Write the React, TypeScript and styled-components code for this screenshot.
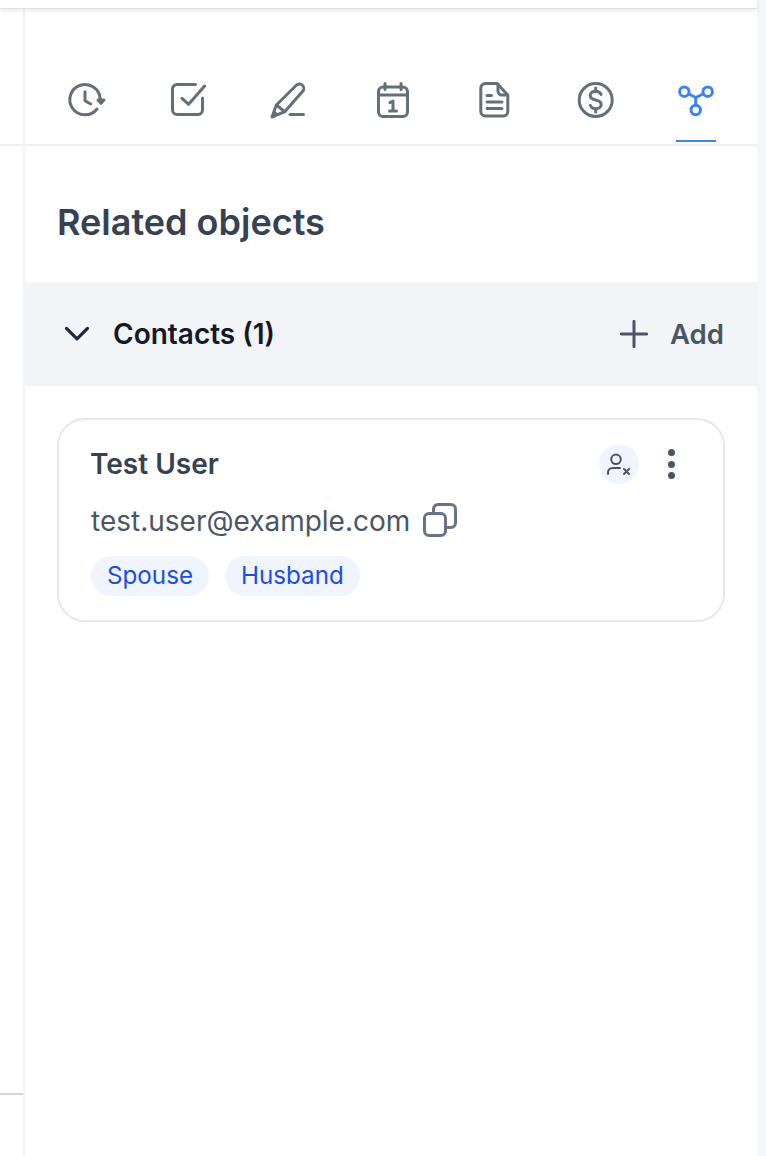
import React from "react";
import styled, { createGlobalStyle } from "styled-components";

const Global = createGlobalStyle`
  html, body { margin: 0; padding: 0; background: #fff; }
  body { font-family: Inter, "Liberation Sans", sans-serif; }
  * { box-sizing: border-box; }
`;

const Page = styled.div`
  display: flex;
  width: 766px;
  height: 1156px;
  overflow: hidden;
`;
const Column = styled.div`
  width: 757px;
  display: flex;
  flex-direction: column;
`;
const Strip = styled.div`
  width: 9px;
  background: #f3f6fb;
`;
const TopBar = styled.div`
  height: 9px;
  flex: none;
  background: #fff;
  border-bottom: 1px solid #dfe1e4;
  box-shadow: 0 2px 5px rgba(60, 70, 85, 0.12);
  position: relative;
  z-index: 1;
`;
const Body = styled.div`
  flex: 1;
  display: flex;
  min-height: 0;
`;
const Rail = styled.div`
  width: 25px;
  flex: none;
  border-right: 2px solid #f0f4f9;
  display: flex;
  flex-direction: column;
`;
const RailLine = styled.div<{ $top: number; $color: string }>`
  height: 2px;
  margin-top: ${(p) => p.$top}px;
  background: ${(p) => p.$color};
`;
const Main = styled.div`
  flex: 1;
  display: flex;
  flex-direction: column;
  min-width: 0;
`;
const Tabs = styled.div`
  height: 137px;
  padding: 0 41px;
  display: flex;
  justify-content: space-between;
  border-bottom: 2px solid #eceef2;
`;
const Tab = styled.div<{ $active?: boolean }>`
  width: 40px;
  height: 133px;
  padding-top: 71px;
  display: flex;
  justify-content: center;
  color: ${(p) => (p.$active ? "#3b82f6" : "#637079")};
  border-bottom: 2px solid ${(p) => (p.$active ? "#3b82f6" : "transparent")};
`;
const Heading = styled.h2`
  margin: 0;
  padding: 56px 32px 40px;
  font-size: 36px;
  line-height: 40px;
  font-weight: 600;
  color: #364152;
`;
const Band = styled.div`
  height: 104px;
  flex: none;
  background: #f2f4f8;
  display: flex;
  align-items: center;
  padding: 0 33px 0 38px;
`;
const ChevronIcon = styled.span`
  display: flex;
  color: #1f2937;
`;
const BandTitle = styled.span`
  margin-left: 22px;
  font-size: 28px;
  font-weight: 600;
  color: #121926;
  flex: 1;
`;
const PlusIcon = styled.span`
  display: flex;
  color: #4b5565;
`;
const AddLabel = styled.span`
  margin-left: 22px;
  font-size: 27.600px;
  font-weight: 600;
  color: #4b5565;
`;
const Cards = styled.div`
  padding: 32px;
`;
const Card = styled.div`
  height: 204px;
  border: 2px solid #e5e7eb;
  border-radius: 28px;
  padding: 22px 32px 0;
`;
const CardTop = styled.div`
  display: flex;
  align-items: center;
  height: 44px;
`;
const Name = styled.span`
  flex: 1;
  margin-left: -1px;
  font-size: 28px;
  font-weight: 600;
  color: #364152;
`;
const RoundIcon = styled.div`
  width: 40px;
  height: 40px;
  border-radius: 50%;
  background: #eff4ff;
  display: flex;
  align-items: center;
  justify-content: center;
  color: #4b5565;
`;
const Kebab = styled.div`
  width: 7px;
  margin: 0 16px 0 29px;
  display: flex;
  flex-direction: column;
  gap: 4.700px;
  span {
    width: 7px;
    height: 7px;
    border-radius: 50%;
    background: #4b5565;
  }
`;
const EmailRow = styled.div`
  margin-top: 17px;
  display: flex;
  align-items: center;
  height: 36px;
`;
const Email = styled.span`
  font-size: 28px;
  font-weight: 400;
  color: #4b5565;
`;
const CopyIcon = styled.span`
  display: flex;
  margin: 0 0 3px 13px;
  color: #697386;
`;
const Badges = styled.div`
  margin-top: 17px;
  display: flex;
  gap: 16px;
`;
const Badge = styled.span`
  height: 40px;
  padding: 0 16px;
  border-radius: 20px;
  background: #eff4ff;
  color: #1c4ee0;
  font-size: 24.200px;
  line-height: 40px;
  font-weight: 400;
`;

const Ico = ({ children, size = 40, sw = 3 }: { children: React.ReactNode; size?: number; sw?: number }) => (
  <svg width={size} height={size} viewBox="0 0 40 40" fill="none" stroke="currentColor" strokeWidth={sw} strokeLinecap="round" strokeLinejoin="round">
    {children}
  </svg>
);

const tabs: React.ReactNode[] = [
  <Ico key="h">
    <path d="M34.200 19.300A15.200 15.200 0 1 0 31 29" />
    <path d="M19 11.700v9l5.700 3.300" />
    <path d="M32 20h6l-3 3.300z" fill="currentColor" />
  </Ico>,
  <Ico key="c">
    <path d="M27.500 4.500H9a4.500 4.500 0 0 0-4.500 4.500v21A4.500 4.500 0 0 0 9 34.500h21a4.500 4.500 0 0 0 4.500-4.500V18" />
    <path d="M14 18.300l6.600 6L36.600 6" />
  </Ico>,
  <Ico key="p">
    <path d="M3 37l4.400-12L27.300 5.300a4.300 4.300 0 0 1 6.200 6.200L15.700 31.700z" />
    <path d="M7.400 25l8.300 6.700" />
    <path d="M3.500 36.500l1.500-5 3.500 3z" fill="currentColor" strokeWidth="2" />
    <path d="M21 34.500h13.500" />
  </Ico>,
  <Ico key="d">
    <rect x="7.500" y="7" width="29" height="29.500" rx="4.500" />
    <path d="M7.500 15h29M14 3.500v6M30 3.500v6" />
    <path d="M19 22.500l3-1.500v10M18.500 31h7" />
  </Ico>,
  <Ico key="f">
    <path d="M24 3.500H12.300a4.500 4.500 0 0 0-4.500 4.500v23.500a4.500 4.500 0 0 0 4.500 4.500h18a4.500 4.500 0 0 0 4.500-4.500V15z" />
    <path d="M25 4v7a4 4 0 0 0 4 4h5.500" />
    <path d="M14 15.500h4.500M14 22h15M14 28.500h15" />
  </Ico>,
  <Ico key="s">
    <circle cx="21.700" cy="20" r="16.500" />
    <path d="M27 14.500c-1-2.300-3-3.300-5.300-3.300-3.200 0-5.500 1.700-5.500 4.300s2.300 3.800 5.500 4.500 5.500 1.900 5.500 4.500-2.300 4.300-5.500 4.300c-2.300 0-4.300-1-5.300-3.300" />
    <path d="M21.700 8v3.200M21.700 28.800V32" />
  </Ico>,
  <Ico key="n">
    <circle cx="8.300" cy="11.700" r="4.700" />
    <circle cx="31.700" cy="11.700" r="4.700" />
    <circle cx="19.700" cy="30" r="4.700" />
    <path d="M12.800 14l7 3.500 7.300-3.500M19.700 17.500v7.500" />
  </Ico>,
];

export default function App() {
  return (
    <Page>
      <Global />
      <Column>
        <TopBar />
        <Body>
          <Rail>
            <RailLine $top={135} $color="#eceef2" />
            <RailLine $top={947} $color="#d4d6d9" />
          </Rail>
          <Main>
            <Tabs>
              {tabs.map((icon, i) => (
                <Tab key={i} $active={i === 6}>
                  {icon}
                </Tab>
              ))}
            </Tabs>
            <Heading>Related objects</Heading>
            <Band>
              <ChevronIcon>
                <Ico size={28} sw={4.500}>
                  <path d="M5 12l15 15 15-15" />
                </Ico>
              </ChevronIcon>
              <BandTitle>Contacts (1)</BandTitle>
              <PlusIcon>
                <Ico size={28} sw={4.300}>
                  <path d="M20 2v36M2 20h36" />
                </Ico>
              </PlusIcon>
              <AddLabel>Add</AddLabel>
            </Band>
            <Cards>
              <Card>
                <CardTop>
                  <Name>Test User</Name>
                  <RoundIcon>
                    <svg width="24" height="24" viewBox="0 0 24 24" fill="none" stroke="currentColor" strokeWidth="2" strokeLinecap="round">
                      <circle cx="9" cy="7.300" r="4.800" />
                      <path d="M1 22v-1.500a4.500 4.500 0 0 1 4.500-4.500H13" />
                      <path d="M17 17l5 5M22 17l-5 5" />
                    </svg>
                  </RoundIcon>
                  <Kebab>
                    <span />
                    <span />
                    <span />
                  </Kebab>
                </CardTop>
                <EmailRow>
                  <Email>test.user@example.com</Email>
                  <CopyIcon>
                    <svg width="34" height="34" viewBox="0 0 34 34" fill="none" stroke="currentColor" strokeWidth="3" strokeLinejoin="round">
                      <rect x="1.500" y="10.500" width="21" height="22" rx="4.500" />
                      <path d="M10.500 10.500V6a4.500 4.500 0 0 1 4.500-4.500h13a4.500 4.500 0 0 1 4.500 4.500v14a4.500 4.500 0 0 1-4.500 4.500h-5.500" />
                    </svg>
                  </CopyIcon>
                </EmailRow>
                <Badges>
                  <Badge>Spouse</Badge>
                  <Badge>Husband</Badge>
                </Badges>
              </Card>
            </Cards>
          </Main>
        </Body>
      </Column>
      <Strip />
    </Page>
  );
}
